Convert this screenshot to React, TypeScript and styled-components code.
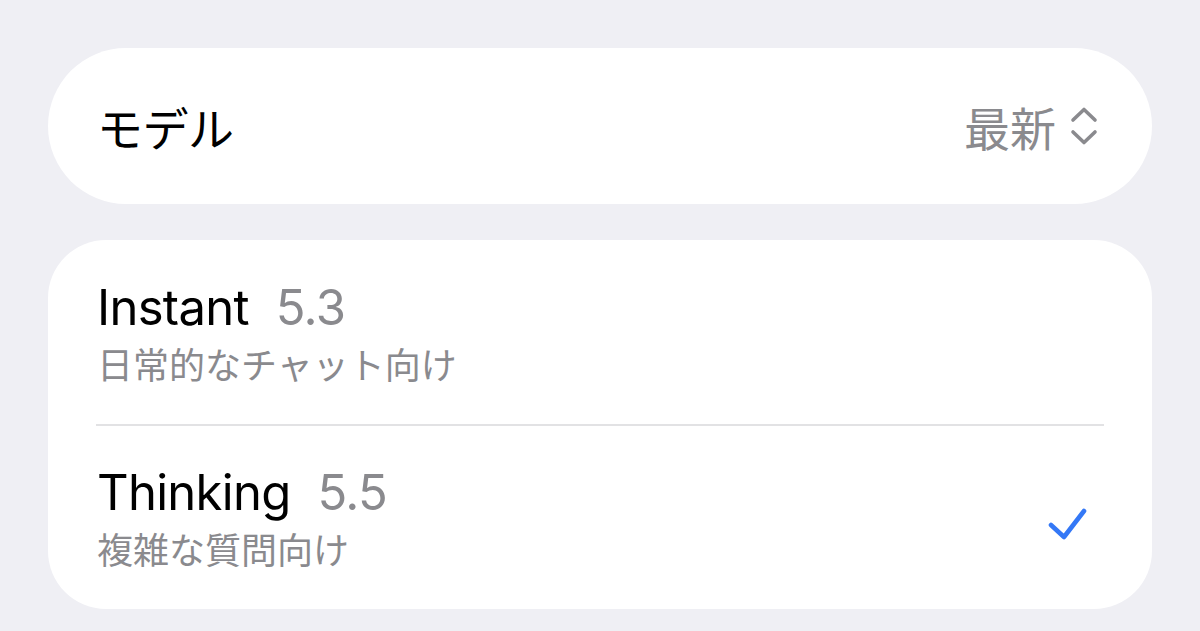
import React from "react";
import styled, { createGlobalStyle } from "styled-components";

const GlobalStyle = createGlobalStyle`
  html, body {
    margin: 0;
    padding: 0;
    background: #efeff4;
  }
  body {
    font-family: Inter, "Noto Sans CJK JP", sans-serif;
    -webkit-font-smoothing: antialiased;
  }
`;

interface Model {
  name: string;
  version: string;
  description: string;
  selected?: boolean;
}

const models: Model[] = [
  { name: "Instant", version: "5.3", description: "日常的なチャット向け" },
  {
    name: "Thinking",
    version: "5.5",
    description: "複雑な質問向け",
    selected: true,
  },
];

const UpDownIcon = () => (
  <svg width="28" height="40" viewBox="0 0 28 40" fill="none">
    <path
      d="M3 14 L14 3.5 L25 14 M3 26 L14 36.5 L25 26"
      stroke="#8a8a8e"
      strokeWidth="3.6"
      strokeLinecap="round"
      strokeLinejoin="round"
    />
  </svg>
);

const CheckIcon = () => (
  <svg width="42" height="40" viewBox="0 0 42 40" fill="none">
    <path
      d="M3 19 L16 31 L36 5"
      stroke="#3478f6"
      strokeWidth="4.6"
      strokeLinecap="round"
      strokeLinejoin="round"
    />
  </svg>
);

const App: React.FC = () => {
  return (
    <>
      <GlobalStyle />
      <Page>
        <PickerCard>
          <Label>モデル</Label>
          <Picker>
            <PickerValue>最新</PickerValue>
            <UpDownIcon />
          </Picker>
        </PickerCard>

        <ListCard>
          {models.map((m, i) => (
            <React.Fragment key={m.name}>
              {i > 0 && <Divider />}
              <Row>
                <RowText>
                  <Title>
                    {m.name}
                    <Version>{m.version}</Version>
                  </Title>
                  <Subtitle>{m.description}</Subtitle>
                </RowText>
                {m.selected && (
                  <CheckSlot>
                    <CheckIcon />
                  </CheckSlot>
                )}
              </Row>
            </React.Fragment>
          ))}
        </ListCard>
      </Page>
    </>
  );
};

const Page = styled.div`
  width: 1200px;
  height: 631px;
  box-sizing: border-box;
  padding: 48px 48px 0;
  display: flex;
  flex-direction: column;
  gap: 36px;
  overflow: hidden;
`;

const PickerCard = styled.div`
  flex-shrink: 0;
  height: 156px;
  border-radius: 78px;
  background: #fff;
  display: flex;
  align-items: center;
  justify-content: space-between;
  padding: 0 54px 0 49px;
`;

const Label = styled.span`
  font-family: "Noto Sans CJK JP", sans-serif;
  font-size: 46px;
  color: #000;
  letter-spacing: -0.5px;
`;

const Picker = styled.div`
  display: flex;
  align-items: center;
  gap: 14px;
`;

const PickerValue = styled.span`
  font-family: "Noto Sans CJK JP", sans-serif;
  font-size: 46px;
  color: #8a8a8e;
`;

const ListCard = styled.div`
  flex-shrink: 0;
  height: 369px;
  border-radius: 58px;
  background: #fff;
  display: flex;
  flex-direction: column;
  padding: 0 48px;
`;

const Divider = styled.div`
  height: 2px;
  background: #e2e2e4;
`;

const Row = styled.div`
  flex: 1;
  display: flex;
  align-items: center;
  justify-content: space-between;
  padding-left: 1px;
`;

const RowText = styled.div`
  display: flex;
  flex-direction: column;
  gap: 4px;
`;

const Title = styled.div`
  font-family: Inter, sans-serif;
  font-size: 49px;
  line-height: 58px;
  color: #000;
  letter-spacing: -0.7px;
`;

const Version = styled.span`
  color: #8a8a8e;
  margin-left: 27px;
`;

const Subtitle = styled.div`
  font-family: "Noto Sans CJK JP", sans-serif;
  font-size: 36px;
  line-height: 44px;
  color: #8a8a8e;
`;

const CheckSlot = styled.div`
  display: flex;
  margin-top: 18px;
  margin-right: 14px;
`;

export default App;
